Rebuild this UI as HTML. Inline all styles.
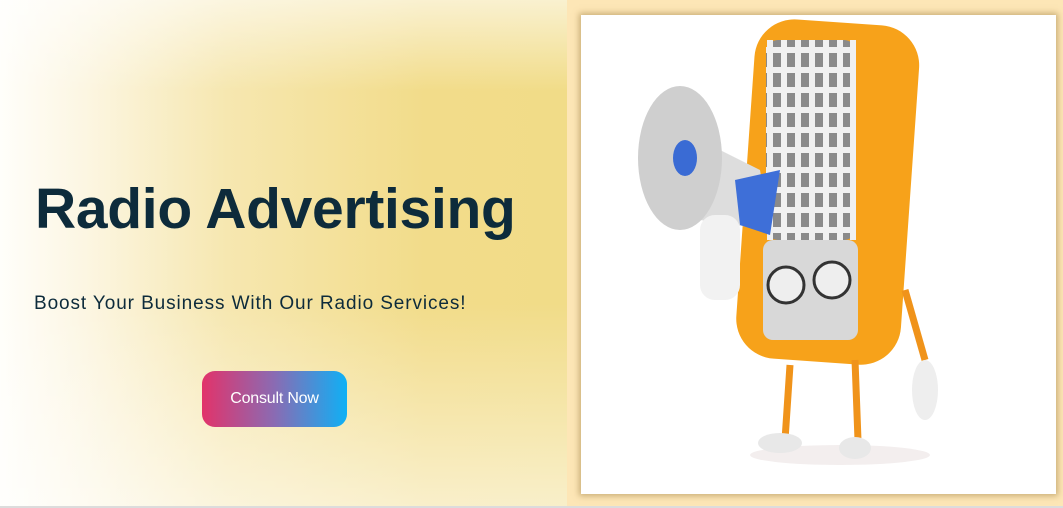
<!DOCTYPE html>
<html><head><meta charset="utf-8"><style>
*{margin:0;padding:0;box-sizing:border-box}
body{width:1063px;height:508px;overflow:hidden;background:#fff;font-family:"Liberation Sans",sans-serif;position:relative}
.left{position:absolute;left:0;top:0;width:567px;height:506px;
background:linear-gradient(90deg,#fffefa 0%,#fcf6e2 15%,#f6e7b0 40%,#f2dc8a 75%,#f1dc88 100%)}
.left:after{content:"";position:absolute;inset:0;background:linear-gradient(180deg,rgba(255,255,255,.6) 0%,rgba(255,255,255,0) 18%,rgba(255,255,255,0) 60%,rgba(255,255,255,.55) 100%)}
.right{position:absolute;left:567px;top:0;width:496px;height:506px;background:#fde6b6}
.img{position:absolute;left:581px;top:15px;width:475px;height:479px;background:#fff;box-shadow:0 0 6px 2px rgba(160,130,70,.55)}
h1{position:absolute;left:35px;top:176px;font-size:57px;font-weight:700;color:#0d2b3b;letter-spacing:-0.3px;z-index:2}
p{position:absolute;left:34px;top:293px;font-size:19px;color:#0d2b3b;z-index:2;letter-spacing:0.9px}
.btn{position:absolute;left:202px;top:371px;width:145px;height:56px;border-radius:13px;background:linear-gradient(90deg,#e2336a,#8a6bb3 50%,#0fb0f5);color:#fff;font-size:16px;text-align:center;line-height:56px;z-index:2;letter-spacing:-.2px}
.line{position:absolute;left:0;top:506px;width:1063px;height:2px;background:#dcdcdc}
</style></head><body>
<div class="left"></div>
<div class="right"></div>
<div class="img">
<svg width="475" height="479" viewBox="581 15 475 479">
<ellipse cx="840" cy="455" rx="90" ry="10" fill="#f3eeee"/>
<line x1="890" y1="95" x2="907" y2="45" stroke="#999" stroke-width="2"/>
<rect x="745" y="22" width="165" height="340" rx="40" fill="#f7a21a" transform="rotate(4 827 195)"/>
<rect x="766" y="40" width="90" height="200" rx="12" fill="#8a8a8a"/>
<g stroke="#f0f0f0" stroke-width="6">
<line x1="766" y1="50" x2="856" y2="50"/><line x1="766" y1="70" x2="856" y2="70"/><line x1="766" y1="90" x2="856" y2="90"/><line x1="766" y1="110" x2="856" y2="110"/><line x1="766" y1="130" x2="856" y2="130"/><line x1="766" y1="150" x2="856" y2="150"/><line x1="766" y1="170" x2="856" y2="170"/><line x1="766" y1="190" x2="856" y2="190"/><line x1="766" y1="210" x2="856" y2="210"/><line x1="766" y1="230" x2="856" y2="230"/>
<line x1="770" y1="40" x2="770" y2="240"/><line x1="784" y1="40" x2="784" y2="240"/><line x1="798" y1="40" x2="798" y2="240"/><line x1="812" y1="40" x2="812" y2="240"/><line x1="826" y1="40" x2="826" y2="240"/><line x1="840" y1="40" x2="840" y2="240"/><line x1="853" y1="40" x2="853" y2="240"/>
</g>
<rect x="763" y="240" width="95" height="100" rx="10" fill="#d8d8d8"/>
<circle cx="786" cy="285" r="18" fill="#eee" stroke="#333" stroke-width="3"/>
<circle cx="832" cy="280" r="18" fill="#eee" stroke="#333" stroke-width="3"/>
<path d="M790 365 L785 440 M855 360 L858 440" stroke="#f0931a" stroke-width="7" fill="none"/>
<ellipse cx="780" cy="443" rx="22" ry="10" fill="#e8e8e8"/>
<ellipse cx="855" cy="448" rx="16" ry="11" fill="#e8e8e8"/>
<path d="M905 290 L925 360" stroke="#f0931a" stroke-width="7"/>
<ellipse cx="925" cy="390" rx="13" ry="30" fill="#eee"/>
<path d="M690 135 L760 170 L770 230 L700 220 Z" fill="#ddd"/>
<path d="M735 180 L780 170 L770 235 L740 225 Z" fill="#3e6fd8"/>
<ellipse cx="680" cy="158" rx="42" ry="72" fill="#cfcfcf"/>
<ellipse cx="685" cy="158" rx="12" ry="18" fill="#3a6bd4"/>
<rect x="700" y="215" width="40" height="85" rx="15" fill="#f2f2f2"/>
</svg>
</div>
<h1>Radio Advertising</h1>
<p>Boost Your Business With Our Radio Services!</p>
<div class="btn">Consult Now</div>
<div class="line"></div>
</body></html>
